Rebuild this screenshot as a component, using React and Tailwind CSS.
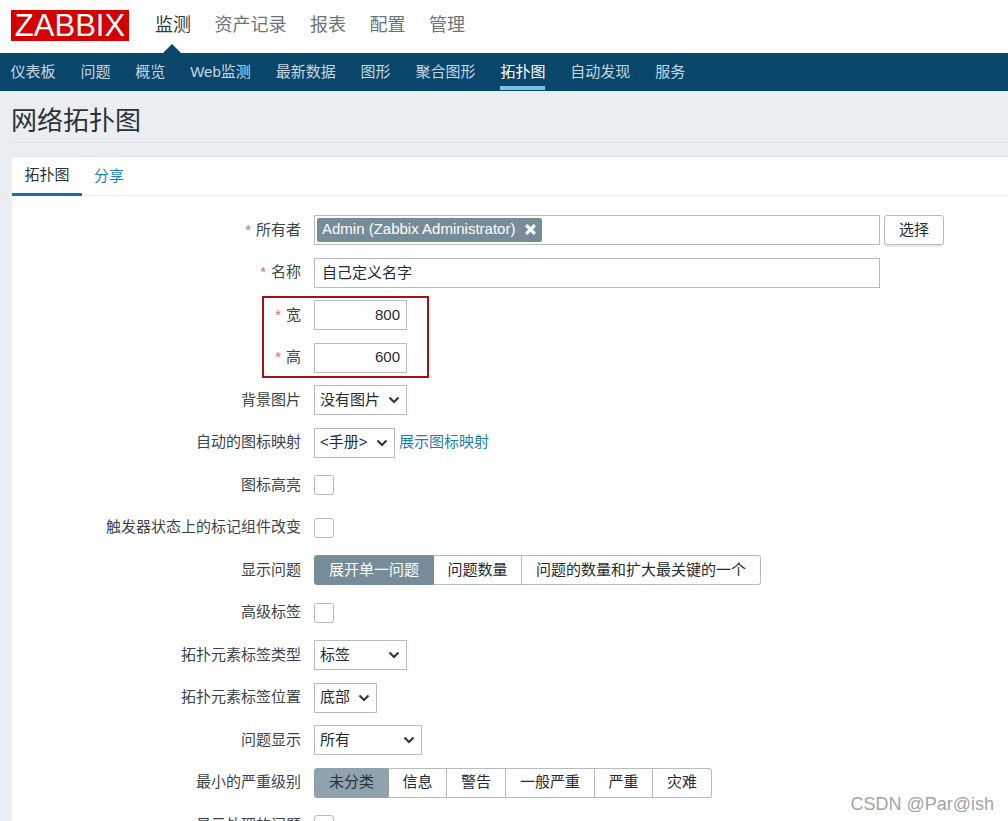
import React from "react";

const Chevron = () => (
  <svg width="12" height="8" viewBox="0 0 12 8" className="shrink-0" aria-hidden="true">
    <path d="M1.5 1.5 L6 6 L10.5 1.5" fill="none" stroke="#2b3a42" strokeWidth="2.2" />
  </svg>
);

const Row = ({ label, req, children }) => (
  <div className="flex items-center h-[30px] shrink-0">
    <div className="w-[289px] shrink-0 text-right text-[#3c4448] whitespace-nowrap pb-[1px]">
      {req && <span className="text-[#d66a6a] mr-[5px]">*</span>}
      {label}
    </div>
    <div className="ml-[13px] flex items-center">{children}</div>
  </div>
);

const Field = ({ value, w, right }) => (
  <input
    readOnly
    value={value}
    className={`${w} h-[30px] border border-[#b5bcc0] bg-white pl-[7px] pr-[6px] pb-[2px] text-[#1f2c33] outline-none ${right ? "text-right" : ""}`}
  />
);

const Select = ({ text, w }) => (
  <div className={`${w} h-[30px] border border-[#b5bcc0] bg-white flex items-center justify-between pl-[5px] pr-[6px] text-[#1f2c33]`}>
    <span className="whitespace-nowrap pb-[1px]">{text}</span>
    <Chevron />
  </div>
);

const Check = () => <div className="w-5 h-5 border border-[#b5bcc0] rounded-[3px] bg-white" />;

const Seg = ({ items }) => (
  <div className="flex h-[30px]">
    {items.map((it, i) => (
      <div
        key={it.t}
        className={`${it.w} h-full flex items-center justify-center whitespace-nowrap pb-[1px] border-y border-r ${i === 0 ? "border-l rounded-l-[3px]" : ""} ${i === items.length - 1 ? "rounded-r-[3px]" : ""} ${it.cls || "bg-white border-[#b5bcc0] text-[#1f2c33]"}`}
      >
        {it.t}
      </div>
    ))}
  </div>
);

const top = ["资产记录", "报表", "配置", "管理"];
const sub = ["仪表板", "问题", "概览", "Web监测", "最新数据", "图形", "聚合图形", "拓扑图", "自动发现", "服务"];

export default function App() {
  return (
    <div className="relative h-[821px] overflow-hidden bg-[#ebeef0] text-[15px] leading-[20px] font-['Liberation_Sans','Noto_Sans_CJK_SC',sans-serif]">
      <header className="h-[53px] bg-white flex items-center pl-[11px]">
        <div className="w-[118px] h-[31px] bg-[#d40000] text-white text-[31px] leading-[32px] flex justify-center mt-[-3px]">ZABBIX</div>
        <nav className="ml-[26px] flex gap-[23.5px] text-[18px] text-[#6b7478] mt-[-4px]">
          <span className="relative text-[#2f3a40]">
            监测
          </span>
          {top.map((t) => <span key={t}>{t}</span>)}
        </nav>
      </header>
      <div className="relative h-[38px] bg-[#0a466a] flex items-center pl-[10.5px] gap-[24.9px] text-[#c5d8e3]">
        <div className="absolute left-[163px] top-[-9px] w-0 h-0 border-x-[9px] border-x-transparent border-b-[9px] border-b-[#0a466a]" />
        {sub.map((s) =>
          s === "拓扑图" ? (
            <span key={s} className="relative h-full flex items-center text-white">
              {s}
              <span className="absolute left-0 right-0 bottom-[1px] h-[4px] bg-[#7cc0e8]" />
            </span>
          ) : (
            <span key={s}>{s}</span>
          )
        )}
      </div>
      <div className="ml-[11px] h-[52px] border-b border-[#dfe3e6] flex items-center">
        <h1 className="text-[26px] leading-[32px] font-normal text-[#2b3338] mt-[8px]">网络拓扑图</h1>
      </div>
      <main className="ml-[12px] mt-[13px] bg-white border-t border-[#dfe4e7] h-[700px]">
        <div className="h-[39px] flex border-b border-[#ebeef0]">
          <div className="w-[70px] h-[39px] border-b-[3px] border-[#0f75b0] flex items-center justify-center text-[#2b3338]">拓扑图</div>
          <div className="ml-[12px] flex items-center text-[#1f7eb0]">分享</div>
        </div>
        <form className="pt-[19px] flex flex-col gap-[12.5px]">
          <Row label="所有者" req>
            <div className="w-[566px] h-[30px] border border-[#b5bcc0] flex items-center pl-[2px]">
              <div className="h-[24px] w-[225px] rounded-[2px] bg-[#768d99] text-white flex items-center pl-[5px] pb-[2px] whitespace-nowrap">
                Admin (Zabbix Administrator)
                <svg width="13" height="13" viewBox="0 0 12 12" className="ml-[9px]" aria-hidden="true">
                  <path d="M2 2 L10 10 M10 2 L2 10" stroke="#fff" strokeWidth="3" />
                </svg>
              </div>
            </div>
            <button type="button" className="ml-[4px] w-[60px] h-[30px] border border-[#b5bcc0] rounded-[3px] bg-white text-[#1f2c33] shadow-[0_2px_0_#e4ebf0]">选择</button>
          </Row>
          <Row label="名称" req>
            <Field value="自己定义名字" w="w-[566px]" />
          </Row>
          <div className="relative flex flex-col gap-[12.5px]">
            <div className="absolute left-[250px] top-[-4px] w-[167px] h-[82px] border-2 border-[#a80f0f]" />
            <Row label="宽" req>
              <Field value="800" w="w-[93px]" right />
            </Row>
            <Row label="高" req>
              <Field value="600" w="w-[93px]" right />
            </Row>
          </div>
          <Row label="背景图片"><Select text="没有图片" w="w-[93px]" /></Row>
          <Row label="自动的图标映射">
            <Select text="<手册>" w="w-[81px]" />
            <span className="ml-[4px] text-[#1f7eb0] whitespace-nowrap pb-[1px]">展示图标映射</span>
          </Row>
          <Row label="图标高亮"><Check /></Row>
          <Row label="触发器状态上的标记组件改变"><Check /></Row>
          <Row label="显示问题">
            <Seg items={[
              { t: "展开单一问题", w: "w-[120px]", cls: "bg-[#768d99] border-[#768d99] text-white" },
              { t: "问题数量", w: "w-[88px]" },
              { t: "问题的数量和扩大最关键的一个", w: "w-[239px]" },
            ]} />
          </Row>
          <Row label="高级标签"><Check /></Row>
          <Row label="拓扑元素标签类型"><Select text="标签" w="w-[93px]" /></Row>
          <Row label="拓扑元素标签位置"><Select text="底部" w="w-[63px]" /></Row>
          <Row label="问题显示"><Select text="所有" w="w-[108px]" /></Row>
          <Row label="最小的严重级别">
            <Seg items={[
              { t: "未分类", w: "w-[75px]", cls: "bg-[#8fa2ae] border-[#8fa2ae] text-[#26323a]" },
              { t: "信息", w: "w-[58px]" },
              { t: "警告", w: "w-[59px]" },
              { t: "一般严重", w: "w-[89px]" },
              { t: "严重", w: "w-[58px]" },
              { t: "灾难", w: "w-[59px]" },
            ]} />
          </Row>
          <Row label="显示处理的问题"><Check /></Row>
        </form>
      </main>
      <div className="absolute right-[14px] top-[794px] text-[18px] leading-[20px] text-[#a3a3a3] whitespace-nowrap">CSDN @Par@ish</div>
    </div>
  );
}
